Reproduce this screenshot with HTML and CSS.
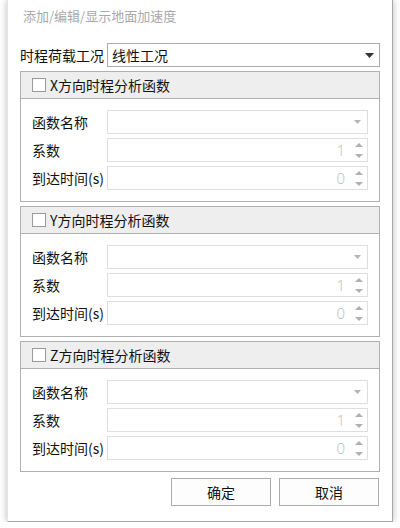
FILE: index.html
```html
<!DOCTYPE html>
<html>
<head>
<meta charset="utf-8">
<link rel="stylesheet" href="styles.css">
</head>
<body>
<div class="window">
  <div class="title">添加/编辑/显示地面加速度</div>
  <div class="toprow">
    <div class="toplabel">时程荷载工况</div>
    <div class="select">
      <span>线性工况</span>
      <svg class="arrow" width="9" height="5" viewBox="0 0 9 5"><path d="M0 0H9L4.5 5Z" fill="#333"/></svg>
    </div>
  </div>

  <div class="group">
    <div class="ghead"><span class="check"></span><span>X方向时程分析函数</span></div>
    <div class="gbody">
      <div class="row"><div class="lbl">函数名称</div><div class="inp"><svg class="darr" width="7" height="4" viewBox="0 0 7 4"><path d="M0 0H7L3.5 4Z" fill="#b4b4b4"/></svg></div></div>
      <div class="row"><div class="lbl">系数</div><div class="inp num"><span>1</span><span class="spin"><svg width="8" height="15" viewBox="0 0 8 15"><path d="M0 4L4 0L8 4Z" fill="#b0b0b0"/><path d="M0 11H8L4 15Z" fill="#b0b0b0"/></svg></span></div></div>
      <div class="row"><div class="lbl">到达时间(s)</div><div class="inp num"><span>0</span><span class="spin"><svg width="8" height="15" viewBox="0 0 8 15"><path d="M0 4L4 0L8 4Z" fill="#b0b0b0"/><path d="M0 11H8L4 15Z" fill="#b0b0b0"/></svg></span></div></div>
    </div>
  </div>

  <div class="group">
    <div class="ghead"><span class="check"></span><span>Y方向时程分析函数</span></div>
    <div class="gbody">
      <div class="row"><div class="lbl">函数名称</div><div class="inp"><svg class="darr" width="7" height="4" viewBox="0 0 7 4"><path d="M0 0H7L3.5 4Z" fill="#b4b4b4"/></svg></div></div>
      <div class="row"><div class="lbl">系数</div><div class="inp num"><span>1</span><span class="spin"><svg width="8" height="15" viewBox="0 0 8 15"><path d="M0 4L4 0L8 4Z" fill="#b0b0b0"/><path d="M0 11H8L4 15Z" fill="#b0b0b0"/></svg></span></div></div>
      <div class="row"><div class="lbl">到达时间(s)</div><div class="inp num"><span>0</span><span class="spin"><svg width="8" height="15" viewBox="0 0 8 15"><path d="M0 4L4 0L8 4Z" fill="#b0b0b0"/><path d="M0 11H8L4 15Z" fill="#b0b0b0"/></svg></span></div></div>
    </div>
  </div>

  <div class="group">
    <div class="ghead"><span class="check"></span><span>Z方向时程分析函数</span></div>
    <div class="gbody">
      <div class="row"><div class="lbl">函数名称</div><div class="inp"><svg class="darr" width="7" height="4" viewBox="0 0 7 4"><path d="M0 0H7L3.5 4Z" fill="#b4b4b4"/></svg></div></div>
      <div class="row"><div class="lbl">系数</div><div class="inp num"><span>1</span><span class="spin"><svg width="8" height="15" viewBox="0 0 8 15"><path d="M0 4L4 0L8 4Z" fill="#b0b0b0"/><path d="M0 11H8L4 15Z" fill="#b0b0b0"/></svg></span></div></div>
      <div class="row"><div class="lbl">到达时间(s)</div><div class="inp num"><span>0</span><span class="spin"><svg width="8" height="15" viewBox="0 0 8 15"><path d="M0 4L4 0L8 4Z" fill="#b0b0b0"/><path d="M0 11H8L4 15Z" fill="#b0b0b0"/></svg></span></div></div>
    </div>
  </div>

  <div class="buttons">
    <div class="btn">确定</div>
    <div class="btn">取消</div>
  </div>
</div>
</body>
</html>
```

FILE: styles.css
```css
* { box-sizing: border-box; }
html, body {
  margin: 0;
  padding: 0;
  background: #ffffff;
}
body {
  padding-left: 7px;
  font-family: "Noto Sans CJK SC", "Noto Sans", sans-serif;
  font-size: 14px;
  color: #111;
}
.window {
  width: 386px;
  height: 522px;
  background: #fff;
  border-right: 1px solid #a8a8a8;
  border-bottom: 1px solid #a8a8a8;
  border-left: 1px solid #e4e4e4;
  box-shadow: 0 0 7px rgba(0,0,0,0.28);
  padding: 0 12px 0 12px;
  display: flex;
  flex-direction: column;
}
.title {
  height: 32px;
  line-height: 32px;
  font-size: 13px;
  color: #a9a9a9;
  padding-left: 3px;
}
.toprow {
  margin-top: 11px;
  display: flex;
  align-items: center;
  height: 24px;
}
.toplabel {
  width: 87px;
  line-height: 24px;
}
.select {
  flex: 1;
  height: 24px;
  border: 1px solid #ababab;
  display: flex;
  align-items: center;
  justify-content: space-between;
  padding: 0 5px 0 4px;
  line-height: 22px;
}
.select .arrow { margin-top: 1px; }
.group {
  margin-top: 4px;
  border: 1px solid #b0b0b0;
  height: 131px;
  display: flex;
  flex-direction: column;
}
.toprow + .group { margin-top: 4px; }
.ghead {
  height: 27px;
  background: #eeeeee;
  border-bottom: 1px solid #b0b0b0;
  display: flex;
  align-items: center;
  padding-left: 11px;
  gap: 4px;
}
.check {
  width: 14px;
  height: 14px;
  border: 1px solid #9a9a9a;
  background: #fff;
}
.gbody {
  padding: 11px 11px 0 11px;
  display: flex;
  flex-direction: column;
  gap: 4px;
}
.row {
  display: flex;
  align-items: center;
  height: 24px;
}
.lbl {
  width: 75px;
  line-height: 24px;
  white-space: nowrap;
}
.inp {
  flex: 1;
  height: 24px;
  border: 1px solid #dedede;
  display: flex;
  align-items: center;
  justify-content: flex-end;
  padding-right: 6px;
}
.inp .darr { margin-right: 0; }
.num span:first-child {
  color: #b0bccb;
  font-family: "Open Sans", "Noto Sans", sans-serif;
  font-weight: 300;
  font-size: 15px;
  margin-right: 10px;
}
.spin { display: flex; align-items: center; margin-right: -2px; }
.buttons {
  margin-top: 6px;
  display: flex;
  justify-content: flex-end;
  gap: 8px;
  padding-right: 1px;
}
.btn {
  width: 100px;
  height: 28px;
  border: 1px solid #ababab;
  background: #fdfdfd;
  display: flex;
  align-items: center;
  justify-content: center;
}
```
